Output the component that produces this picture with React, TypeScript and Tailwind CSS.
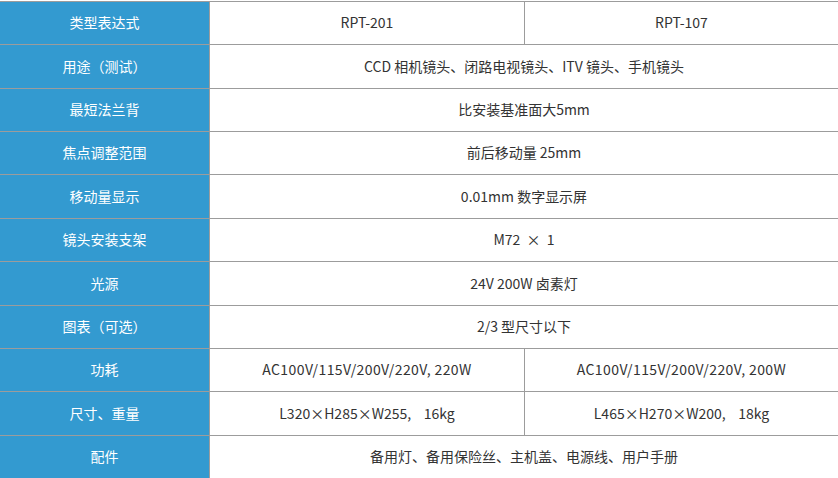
import React from "react";

type Row = { label: string; h: string; cells: string[]; track?: string };

const rows: Row[] = [
  { label: "类型表达式", h: "h-[43px]", cells: ["RPT-201", "RPT-107"] },
  { label: "用途（测试）", h: "h-[44px]", cells: ["CCD 相机镜头、闭路电视镜头、ITV 镜头、手机镜头"] },
  { label: "最短法兰背", h: "h-[43px]", cells: ["比安装基准面大5mm"] },
  { label: "焦点调整范围", h: "h-[43px]", cells: ["前后移动量 25mm"] },
  { label: "移动量显示", h: "h-[44px]", cells: ["0.01mm 数字显示屏"] },
  { label: "镜头安装支架", h: "h-[43px]", cells: ["M72 \u00a0×\u00a0 1"] },
  { label: "光源", h: "h-[44px]", cells: ["24V 200W 卤素灯"] },
  { label: "图表（可选）", h: "h-[43px]", cells: ["2/3 型尺寸以下"] },
  {
    label: "功耗",
    h: "h-[43px]",
    cells: ["AC100V/115V/200V/220V, 220W", "AC100V/115V/200V/220V, 200W"],
    track: "tracking-[0.4px]",
  },
  { label: "尺寸、重量", h: "h-[44px]", cells: ["L320×H285×W255,\u00a0\u00a0\u00a0 16kg", "L465×H270×W200,\u00a0\u00a0\u00a0 18kg"] },
  { label: "配件", h: "h-[43px]", cells: ["备用灯、备用保险丝、主机盖、电源线、用户手册"] },
];

export default function App() {
  return (
    <div
      className="w-[838px] h-[478px] overflow-hidden bg-white pt-px text-[14px] leading-[20px] text-[#333]"
      style={{ fontFamily: '"Noto Sans CJK SC", "Noto Sans", sans-serif' }}
    >
      <div className="border-t border-[#9c9c9c]">
        {rows.map((r, i) => (
          <div key={i} className={`flex ${r.h} border-b border-[#9c9c9c]`}>
            <div className="w-[210px] shrink-0 bg-[#339ad0] border-r border-[#9c9c9c] flex items-center justify-center pb-[2px] text-white">
              {r.label}
            </div>
            {r.cells.length === 2 ? (
              <>
                <div className={`w-[315px] shrink-0 border-r border-[#9c9c9c] flex items-center justify-center pb-[2px] whitespace-pre ${r.track ?? ""}`}>
                  {r.cells[0]}
                </div>
                <div className={`flex-1 flex items-center justify-center pb-[2px] whitespace-pre ${r.track ?? ""}`}>{r.cells[1]}</div>
              </>
            ) : (
              <div className="flex-1 flex items-center justify-center pb-[2px] whitespace-pre">{r.cells[0]}</div>
            )}
          </div>
        ))}
      </div>
    </div>
  );
}
